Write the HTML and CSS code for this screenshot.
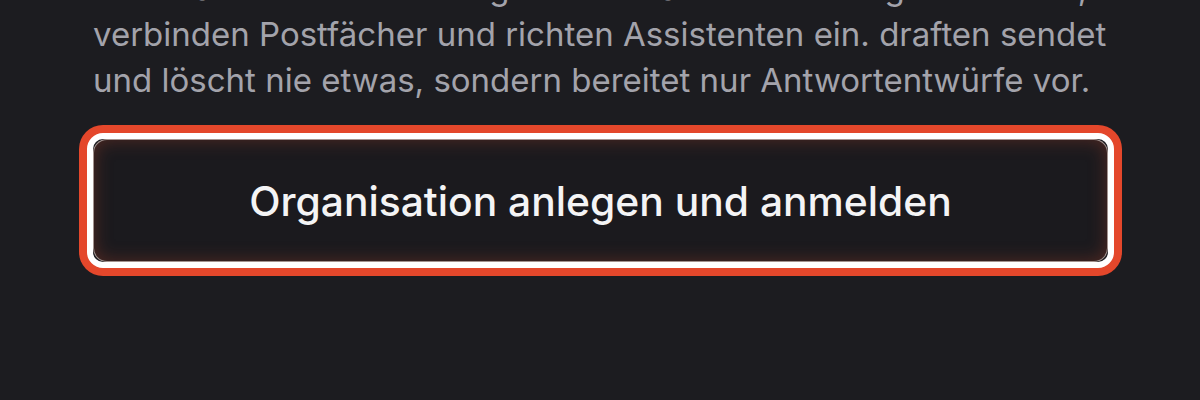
FILE: index.html
```html
<!DOCTYPE html>
<html lang="de">
<head>
<meta charset="utf-8">
<title>Organisation anlegen</title>
<link rel="stylesheet" href="styles.css">
</head>
<body>
<main class="panel">
  <p class="intro">Hier startet die Einrichtung für Ihr Team. Anmeldung und Rollen,<br>verbinden Postfächer und richten Assistenten ein. draften sendet<br>und löscht nie etwas, sondern bereitet nur Antwortentwürfe vor.</p>
  <div class="focus-ring">
    <button class="primary" type="button">Organisation anlegen und anmelden</button>
  </div>
</main>
</body>
</html>
```

FILE: styles.css
```css
html, body {
  margin: 0;
  padding: 0;
  background: #1c1c20;
}
body {
  width: 1200px;
  height: 400px;
  overflow: hidden;
  font-family: Inter, "Noto Sans", "Liberation Sans", sans-serif;
}
.panel {
  padding-left: 93px;
  width: 1014px;
  display: flex;
  flex-direction: column;
}
.intro {
  margin: -35px 0 0 0;
  font-size: 33px;
  line-height: 46px;
  color: #a3a3ab;
  white-space: nowrap;
}
.focus-ring {
  margin: 30px -7px 0 -6px;
  border: 6px solid #ffffff;
  border-radius: 16px;
  background: #1c1c20;
  box-shadow: 0 0 0 8px #e4472b;
  display: flex;
}
.primary {
  flex: 1;
  height: 123px;
  border: 1px solid rgba(255, 228, 218, 0.6);
  border-radius: 14px;
  background: #1b1a1e;
  box-shadow: inset 0 0 18px rgba(150, 60, 40, 0.45);
  color: #f4f4f5;
  font-family: Inter, "Noto Sans", "Liberation Sans", sans-serif;
  font-size: 40.8px;
  font-weight: 500;
  padding: 0;
  display: flex;
  align-items: center;
  justify-content: center;
}
```
